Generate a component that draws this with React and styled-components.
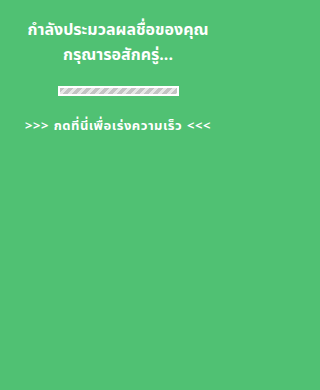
import React from "react";
import styled, { createGlobalStyle } from "styled-components";

const Global = createGlobalStyle`
  html, body { margin: 0; padding: 0; background: #50c173; }
  body { font-family: Tahoma, "Noto Sans Thai", "Noto Sans", "DejaVu Sans", sans-serif; }
`;

const Page = styled.div`
  width: 236px;
  min-height: 390px;
  background: #50c173;
  display: flex;
  flex-direction: column;
  align-items: center;
  padding-top: 18px;
  box-sizing: border-box;
  color: #fff;
`;

const Title = styled.h1`
  margin: 0;
  font-size: 16px;
  line-height: 25px;
  font-weight: bold;
  text-align: center;
`;

const Bar = styled.div`
  margin-top: 18px;
  width: 121px;
  height: 10px;
  box-sizing: border-box;
  border: 2px solid #fff;
  background-color: #c4c4c4;
  background-image: linear-gradient(
    -45deg,
    rgba(255, 255, 255, 0.6) 25%,
    transparent 25%,
    transparent 50%,
    rgba(255, 255, 255, 0.6) 50%,
    rgba(255, 255, 255, 0.6) 75%,
    transparent 75%,
    transparent
  );
  background-size: 9px 9px;
`;

const Link = styled.a`
  margin-top: 22px;
  font-size: 13px;
  line-height: 16px;
  font-weight: bold;
  color: #fff;
  text-decoration: none;
  letter-spacing: 0.5px;
  word-spacing: 1px;
  white-space: nowrap;
`;

export default function App() {
  return (
    <>
      <Global />
      <Page>
        <Title>
          กำลังประมวลผลชื่อของคุณ
          <br />
          กรุณารอสักครู่...
        </Title>
        <Bar />
        <Link href="#">&gt;&gt;&gt; กดที่นี่เพื่อเร่งความเร็ว &lt;&lt;&lt;</Link>
      </Page>
    </>
  );
}
